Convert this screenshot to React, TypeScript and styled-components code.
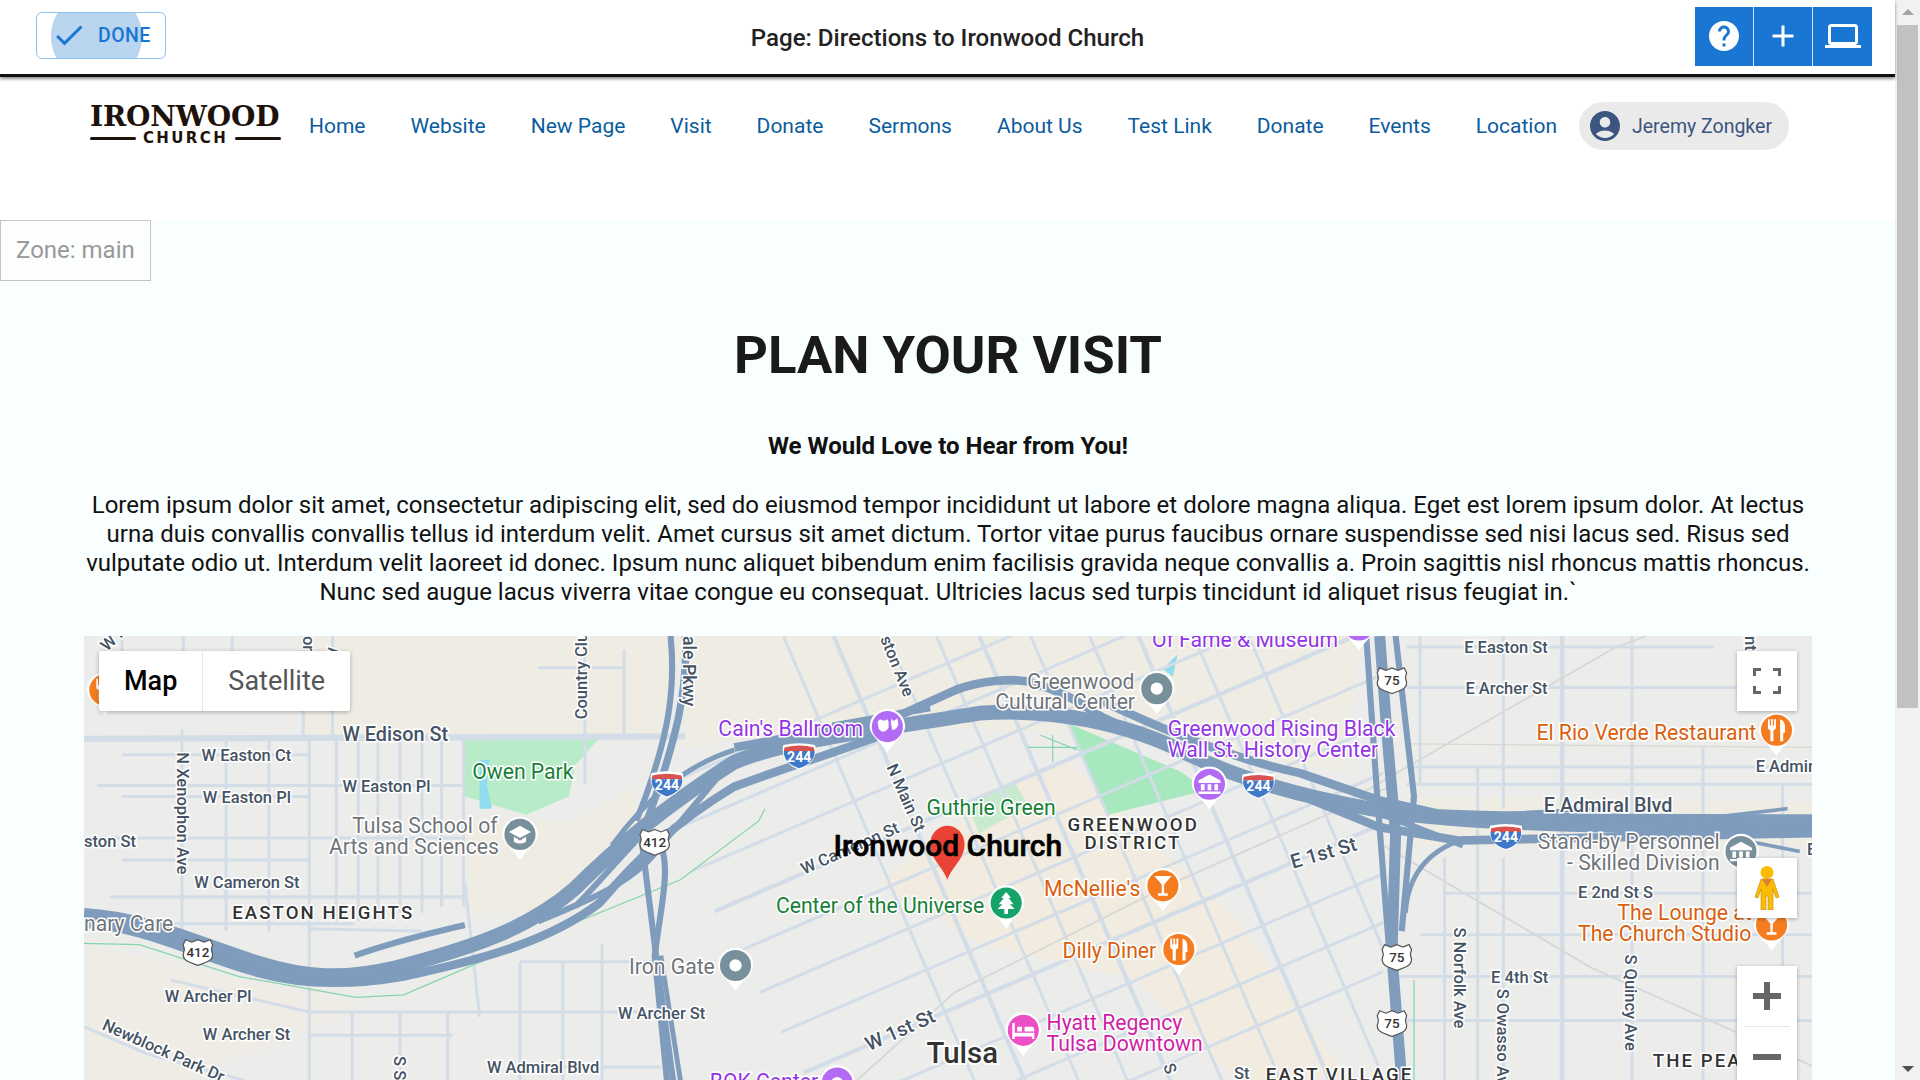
import React from 'react';
import styled, { createGlobalStyle } from 'styled-components';
import { MdAccountCircle, MdAdd, MdCheck, MdHelp, MdLaptop } from 'react-icons/md';

const GlobalStyle = createGlobalStyle`
  html, body {
    margin: 0;
    padding: 0;
    height: 100%;
    overflow: hidden;
    background: #fff;
    font-family: Roboto, "Liberation Sans", sans-serif;
  }
  * { box-sizing: border-box; }
`;

const navItems = ['Home', 'Website', 'New Page', 'Visit', 'Donate', 'Sermons', 'About Us', 'Test Link', 'Donate', 'Events', 'Location'];

// map drawing uses the coordinates of the 1568 wide reference, hence the viewBox
type Lbl = [string, number, number, number?, number?];

const roadLabels: Lbl[] = [
  ['W Edison St', 280, 605, 0, 16.2],
  ['W Easton Ct', 165, 621],
  ['W Easton Pl', 280, 646],
  ['W Easton Pl', 166, 655],
  ['ston St', 69, 691],
  ['W Cameron St', 159, 725],
  ['N Xenophon Ave', 145, 614, 90],
  ['W Archer Pl', 135, 818],
  ['W Archer St', 166, 849],
  ['Newblock Park Dr', 83, 840, 24],
  ['S S', 322, 862, 90],
  ['W Admiral Blvd', 398, 876],
  ['W Archer St', 505, 832],
  ['Country Club', 480, 587, -90],
  ['ale Pkwy', 558, 519, 90, 14.5],
  ['ston Ave', 719, 521, 68],
  ['N Main St', 724, 626, 66],
  ['W Cameron St', 657, 714, -24],
  ['W 1st St', 710, 858, -24, 16.2],
  ['E 1st St', 1056, 709, -16, 16.2],
  ['E Easton St', 1196, 533],
  ['E Archer St', 1197, 566],
  ['E Admir', 1434, 630],
  ['E Admiral Blvd', 1261, 663, 0, 16.2],
  ['E 2nd St S', 1289, 733],
  ['E 4th St', 1218, 802],
  ['S Norfolk Ave', 1188, 757, 90],
  ['S Owasso Ave', 1223, 807, 90],
  ['S Quincy Ave', 1327, 779, 90],
  ['nt', 1425, 519, 90],
  ['E', 1476, 698],
  ['S', 950, 870, 70],
  ['St', 1008, 881],
  ['W H', 88, 532, -45],
  ['or', 248, 519, 90],
  ['A', 268, 528, 90],
];

const pois: { t: string; x: number; y: number; c: string }[] = [
  { t: 'Of Fame & Museum', x: 941, y: 528, c: '#9334e6' },
  { t: 'Greenwood', x: 839, y: 562, c: '#70757a' },
  { t: 'Cultural Center', x: 813, y: 579, c: '#70757a' },
  { t: "Cain's Ballroom", x: 587, y: 601, c: '#9334e6' },
  { t: 'Greenwood Rising Black', x: 954, y: 601, c: '#9334e6' },
  { t: 'Wall St. History Center', x: 954, y: 618, c: '#9334e6' },
  { t: 'El Rio Verde Restaurant', x: 1255, y: 604, c: '#d95f0e' },
  { t: 'Owen Park', x: 386, y: 636, c: '#188038' },
  { t: 'Tulsa School of', x: 288, y: 680, c: '#70757a' },
  { t: 'Arts and Sciences', x: 269, y: 697, c: '#70757a' },
  { t: 'Guthrie Green', x: 757, y: 665, c: '#188038' },
  { t: 'Stand-by Personnel', x: 1256, y: 693, c: '#70757a' },
  { t: '- Skilled Division', x: 1280, y: 710, c: '#70757a' },
  { t: "McNellie's", x: 853, y: 731, c: '#d95f0e' },
  { t: 'Center of the Universe', x: 634, y: 745, c: '#188038' },
  { t: 'Dilly Diner', x: 868, y: 782, c: '#d95f0e' },
  { t: 'Iron Gate', x: 514, y: 795, c: '#70757a' },
  { t: 'Hyatt Regency', x: 855, y: 841, c: '#d01ea6' },
  { t: 'Tulsa Downtown', x: 855, y: 858, c: '#d01ea6' },
  { t: 'The Lounge at', x: 1321, y: 751, c: '#d95f0e' },
  { t: 'The Church Studio', x: 1289, y: 768, c: '#d95f0e' },
  { t: 'BOK Center', x: 580, y: 889, c: '#9334e6' },
  { t: 'nary Care', x: 69, y: 760, c: '#70757a' },
];

const hoods: [string, number, number][] = [
  ['EASTON HEIGHTS', 190, 750],
  ['GREENWOOD', 872, 678],
  ['DISTRICT', 886, 693],
  ['EAST VILLAGE', 1034, 882],
  ['THE PEARL', 1350, 871],
];

const westStreets = [
  [149, 595, 149, 760], [185, 600, 185, 760], [220, 600, 220, 760], [253, 600, 253, 882], [275, 600, 275, 752],
  [293, 600, 293, 752], [309, 600, 309, 750], [327, 600, 327, 745], [345, 600, 345, 745], [361, 600, 361, 740], [379, 600, 379, 740],
  [80, 641, 253, 641], [100, 616, 253, 616], [100, 650, 253, 650], [69, 684, 379, 684], [100, 702, 253, 702], [90, 732, 379, 732],
  [69, 754, 290, 754], [253, 641, 379, 641], [253, 758, 345, 760], [253, 826, 540, 826], [140, 800, 253, 826], [253, 845, 370, 845],
  [288, 826, 288, 882], [327, 826, 327, 882], [366, 826, 366, 882], [425, 785, 425, 882], [460, 785, 460, 882], [492, 770, 492, 882],
  [425, 785, 540, 785], [425, 871, 540, 871], [69, 838, 120, 860], [120, 860, 200, 882], [380, 720, 392, 830], [100, 519, 100, 570],
  [150, 519, 150, 570], [190, 519, 190, 570], [248, 519, 248, 600], [272, 519, 272, 600], [478, 519, 478, 640], [510, 530, 510, 601], [440, 545, 510, 545],
];

const eastStreets = [
  [1149, 528, 1400, 528], [1149, 561, 1456, 561], [1149, 626, 1480, 626], [1149, 640, 1480, 640], [1180, 729, 1480, 729], [1160, 763, 1480, 763],
  [1140, 797, 1480, 797], [1140, 833, 1480, 833], [1207, 626, 1207, 882], [1228, 519, 1228, 660], [1228, 700, 1228, 882], [1333, 519, 1333, 882],
  [1391, 610, 1391, 882], [1456, 640, 1456, 882], [1160, 519, 1160, 640], [1180, 700, 1180, 882],
];

const diagTops = [640, 681, 725, 765, 800, 842, 890, 930, 975, 1020];
const crossAt800 = [530, 570, 610, 651, 692, 733, 773, 814, 855, 895, 935];
const SLOPE = 0.43;

const MapArt = () => (
  <MapSvg viewBox="69 519 1411 363" preserveAspectRatio="xMinYMin slice">
    <defs>
      <clipPath id="downtown">
        <polygon points="540,519 1130,519 1130,882 660,882 560,700" />
      </clipPath>
    </defs>
    <rect x="69" y="519" width="1411" height="363" fill="#ecedea" />

    <polygon points="250,519 560,519 540,600 250,600" fill="#efece3" />
    <polygon points="380,670 470,670 520,640 520,690 440,745 384,745" fill="#efece3" />
    <polygon points="69,770 200,800 300,820 150,882 69,882" fill="#efece6" />
    <polygon points="560,519 1110,519 1100,630 900,600 700,590 560,610" fill="#efece3" />
    <polygon points="820,640 870,620 1010,750 1100,880 1010,882 930,800 800,770 720,720" fill="#f1ecdf" />
    <polygon points="1150,650 1480,655 1480,690 1150,690" fill="#efece3" />

    <polygon points="380,602 490,602 470,625 465,650 430,665 380,650" fill="#b8ecc8" />
    <polygon points="392,620 400,620 398,640 402,660 392,660" fill="#8fdcf0" />
    <polygon points="872,590 965,630 985,645 905,665" fill="#a8e8bf" />
    <polygon points="790,657 830,640 840,658 800,680" fill="#c8ebd0" />
    <polygon points="950,546 962,534 958,552" fill="#8fdcf0" />

    {westStreets.map(([a, b, c, d], i) => <Street key={`w${i}`} x1={a} y1={b} x2={c} y2={d} />)}
    {eastStreets.map(([a, b, c, d], i) => <Street key={`e${i}`} x1={a} y1={b} x2={c} y2={d} />)}
    <Street x1={69} y1={603} x2={560} y2={601} $w={5} />
    <Street x1={1276} y1={519} x2={1276} y2={882} $w={4} />
    <Street x1={1150} y1={607} x2={1480} y2={610} $w={1} $c="#d8d8d0" />
    <g clipPath="url(#downtown)">
      {diagTops.map((x, i) => <Street key={`d${i}`} x1={x} y1={519} x2={x + SLOPE * 363} y2={882} $w={i % 3 === 1 ? 3.5 : 2.5} />)}
      {crossAt800.map((y, i) => <Street key={`c${i}`} x1={500} y1={y + 300 * SLOPE} x2={1200} y2={y - 400 * SLOPE} $w={i % 4 === 3 ? 3.5 : 2.5} />)}
    </g>
    <Rail d="M1090 660 L1320 528 L1345 519" />
    <Rail d="M700 882 L780 810 L960 720 L1140 640" />
    <Rail d="M1130 690 L1300 790 L1480 870" />
    <Trail d="M69 770 L114 771 L195 797 L291 814 L330 812 L421 773 L556 718 L620 670 L625 660" />
    <Trail d="M1155 800 L1155 882" />
    <Trail d="M880 612 L850 600 M860 600 L860 622 M840 610 L880 610" />

    <Freeway $w={12} d="M69 747 C120 750 160 770 211 786 C250 798 280 800 323 790 C380 775 430 760 470 725 C500 695 540 660 600 622 C640 605 720 595 800 582 C860 578 920 590 970 615 C1010 635 1060 650 1130 662 C1200 672 1300 675 1480 675" />
    <Freeway $w={7} d="M69 754 C120 757 160 780 211 794 C250 805 290 804 330 797 C400 782 450 767 490 737 C520 702 550 672 600 642 C640 627 680 615 720 600" />
    <Freeway $w={5} d="M290 780 C330 766 360 760 380 755" />
    <Freeway $w={5} d="M300 800 C330 797 360 790 382 785" />
    <Freeway $w={5} d="M440 752 C480 735 520 720 540 690 L590 630" />
    <Freeway $w={5} d="M470 740 C500 710 525 675 570 640" />
    <Freeway $w={5} d="M525 680 C545 655 575 625 640 610" />
    <Freeway $w={4} d="M500 690 C530 650 560 625 600 612" />
    <Freeway $w={6} d="M560 519 C562 560 555 600 525 680" />
    <Freeway $w={5} d="M548 519 C552 560 548 600 520 670" />
    <Freeway $w={5} d="M524 683 L537 787 L550 882" />
    <Freeway $w={5} d="M540 690 C548 710 540 740 535 780 L545 882" />
    <Freeway $w={4} d="M556 882 L540 780" />
    <Freeway $w={7} d="M600 610 C660 600 700 590 739 582 L781 563 C800 556 830 552 846 558 C870 565 885 575 900 585 L965 615" />
    <Freeway $w={5} d="M680 592 L760 578" />
    <Freeway $w={7} d="M900 572 C960 600 1010 620 1062 631 L1126 653 L1175 664 C1280 668 1380 668 1480 668" />
    <Freeway $w={7} d="M1040 640 L1126 675 L1191 686 C1280 684 1380 682 1480 680" />
    <Freeway $w={3} d="M1230 664 L1310 660 M1390 668 L1460 660 M1420 685 L1470 695" />
    <Freeway $w={9} d="M1127 519 L1133 600 L1140 680 L1137 780 L1145 882" />
    <Freeway $w={5} d="M1116 519 L1125 650 L1135 780" />
    <Freeway $w={5} d="M1140 519 L1155 650 L1145 760" />
    <Freeway $w={5} d="M1130 665 L1195 690" />
    <Freeway $w={4} d="M1148 745 C1150 715 1165 695 1195 685" />

    {roadLabels.map(([t, x, y, r = 0, s = 13.5], i) => (
      <RoadText key={i} x={x} y={y} $size={s} transform={r ? `rotate(${r} ${x} ${y})` : undefined}>{t}</RoadText>
    ))}
    {hoods.map(([t, x, y]) => <HoodText key={t} x={x} y={y}>{t}</HoodText>)}
    {pois.map((p) => <PoiText key={p.t} x={p.x} y={p.y} $color={p.c}>{p.t}</PoiText>)}
    <CityText x={757} y={868}>Tulsa</CityText>

    <Shield x={545} y={640} n="244" />
    <Shield x={653} y={617} n="244" />
    <Shield x={1028} y={641} n="244" />
    <Shield x={1230} y={683} n="244" />
    <Route x={535} y={687} n="412" />
    <Route x={162} y={777} n="412" />
    <Route x={1137} y={555} n="75" />
    <Route x={1141} y={781} n="75" />
    <Route x={1137} y={835} n="75" />

    <Pin x={86} y={563} c="#f57c1f"><Fork /></Pin>
    <Pin x={1110} y={510} c="#b36bf5"><Dot /></Pin>
    <Pin x={725} y={593} c="#b36bf5">
      <path d="M-8 -4 L-6 -6 L-4 -5 L-2 -5 L0 -6 L1 -4 L1 1 Q-3 7 -7 2 Z M3 -7 L4 -5 L6 -5 L8 -7 L9 -2 Q8 2 4 3 L3 -2 Z" fill="#fff" />
    </Pin>
    <Pin x={945} y={562} c="#78909c"><Dot /></Pin>
    <Pin x={601} y={788} c="#78909c"><Dot /></Pin>
    <Pin x={988} y={640} c="#b36bf5"><Museum /></Pin>
    <Pin x={1422} y={695} c="#78909c"><Museum /></Pin>
    <Pin x={1451} y={596} c="#f57c1f"><Fork /></Pin>
    <Pin x={963} y={775} c="#f57c1f"><Fork /></Pin>
    <Pin x={950} y={723} c="#f57c1f"><Glass /></Pin>
    <Pin x={1447} y={755} c="#f57c1f"><Glass /></Pin>
    <Pin x={425} y={681} c="#78909c">
      <path d="M0 -7 L9 -2 L0 3 L-9 -2 Z M-5 2 L0 5 L5 2 L5 6 Q0 9 -5 6 Z" fill="#fff" />
    </Pin>
    <Pin x={822} y={737} c="#16a36a">
      <path d="M0 -9 L4 -4 L2 -4 L6 1 L3 1 L7 5 L1.5 5 L1.5 9 L-1.5 9 L-1.5 5 L-7 5 L-3 1 L-6 1 L-2 -4 L-4 -4 Z" fill="#fff" />
    </Pin>
    <Pin x={836} y={841} c="#ec4fc6">
      <path d="M-9 -6 L-7 -6 L-7 2 L9 2 L9 7 L7 7 L7 5 L-7 5 L-7 7 L-9 7 Z M-5 -3 H-1 V1 H-5 Z M1 -3 H7 Q9 -3 9 0 V1 H1 Z" fill="#fff" />
    </Pin>
    <Pin x={684} y={884} c="#b36bf5"><Dot /></Pin>

    <path d="M760 689 C760 680 767 674 774 674 C781 674 788 680 788 689 C788 701 778 707 774 718 C770 707 760 701 760 689 Z" fill="#ea4335" />
    <MarkerText x={681} y={699}>Ironwood Church</MarkerText>
  </MapSvg>
);

const Pin = ({ x, y, c, children }: { x: number; y: number; c: string; children: React.ReactNode }) => (
  <g transform={`translate(${x} ${y})`}>
    <path d="M-14.5 0 a14.5 14.5 0 1 1 29 0 c0 7 -9 12 -14.5 21 c-5.5 -9 -14.5 -14 -14.5 -21 z" fill="#fff" />
    <circle r="12.7" fill={c} />
    {children}
  </g>
);
const Dot = () => <circle r="5" fill="#fff" />;
const Fork = () => <path d="M-7 -9 H-5.5 V-4 H-4.5 V-9 H-3 V-4 H-2 V-9 H-.5 V-2 Q-.5 0 -2.5 0 V9 H-5 V0 Q-7 0 -7 -2 Z M3 -9 Q7 -8 7 -2 V2 H5.5 V9 H3 Z" fill="#fff" />;
const Museum = () => <path d="M0 -8 L9 -3 L9 -1 L-9 -1 L-9 -3 Z M-7 0 H-4 V5 H-7 Z M-1.5 0 H1.5 V5 H-1.5 Z M4 0 H7 V5 H4 Z M-9 6 H9 V8 H-9 Z" fill="#fff" />;
const Glass = () => <path d="M-7 -8 H7 L1 -1 V6 H4 V8 H-4 V6 H-1 V-1 Z" fill="#fff" />;

const Shield = ({ x, y, n }: { x: number; y: number; n: string }) => (
  <g transform={`translate(${x} ${y})`}>
    <path d="M-13 -9 Q0 -12 13 -9 C15 0 10 8 0 11 C-10 8 -15 0 -13 -9 Z" fill="#fff" />
    <path d="M-12 -7 Q0 -10 12 -7 L12.5 -4 H-12.5 Z" fill="#d8534f" />
    <path d="M-12.5 -4 H12.5 C13 2 9 7 0 10 C-9 7 -13 2 -12.5 -4 Z" fill="#3f78c8" />
    <ShieldText x={0} y={4.5}>{n}</ShieldText>
  </g>
);

const Route = ({ x, y, n }: { x: number; y: number; n: string }) => (
  <g transform={`translate(${x} ${y})`}>
    <path d="M-10 -10 L-5 -8 L0 -10 L5 -8 L10 -10 L12 -6 L11 -2 L12 2 C12 8 5 9 0 11 C-5 9 -12 8 -12 2 L-11 -2 L-12 -6 Z" fill="#fff" stroke="#555" strokeWidth="1" />
    <RouteText x={0} y={4}>{n}</RouteText>
  </g>
);

const App = () => (
  <>
    <GlobalStyle />
    <Page>
      <Content>
        <TopBar>
          <DoneButton>
            <Ripple />
            <DoneIcon><MdCheck size={36} /></DoneIcon>
            <DoneLabel>DONE</DoneLabel>
          </DoneButton>
          <PageTitle>Page: Directions to Ironwood Church</PageTitle>
          <ActionGroup>
            <ActionButton><MdHelp size={36} /></ActionButton>
            <ActionButton><MdAdd size={36} /></ActionButton>
            <ActionButton><MdLaptop size={36} /></ActionButton>
          </ActionGroup>
        </TopBar>

        <SiteNav>
          <Logo>
            <LogoWord>IRONWOOD</LogoWord>
            <LogoSub>
              <LogoRule />
              <LogoSubWord>CHURCH</LogoSubWord>
              <LogoRule />
            </LogoSub>
          </Logo>
          <NavList>
            {navItems.map((item, i) => <NavLink key={i}>{item}</NavLink>)}
          </NavList>
          <UserPill>
            <MdAccountCircle size={36} />
            <span>Jeremy Zongker</span>
          </UserPill>
        </SiteNav>

        <MainZone>
          <ZoneTag>Zone: main</ZoneTag>
          <Heading>PLAN YOUR VISIT</Heading>
          <SubHeading>We Would Love to Hear from You!</SubHeading>
          <BodyText>
            Lorem ipsum dolor sit amet, consectetur adipiscing elit, sed do eiusmod tempor incididunt ut labore et dolore magna aliqua. Eget est lorem ipsum dolor. At lectus urna duis convallis convallis tellus id interdum velit. Amet cursus sit amet dictum. Tortor vitae purus faucibus ornare suspendisse sed nisi lacus sed. Risus sed vulputate odio ut. Interdum velit laoreet id donec. Ipsum nunc aliquet bibendum enim facilisis gravida neque convallis a. Proin sagittis nisl rhoncus mattis rhoncus. Nunc sed augue lacus viverra vitae congue eu consequat. Ultricies lacus sed turpis tincidunt id aliquet risus feugiat in.`
          </BodyText>
          <MapFrame>
            <MapArt />
            <MapTypes>
              <MapType $active>Map</MapType>
              <MapType>Satellite</MapType>
            </MapTypes>
            <FullscreenButton>
              <svg width="28" height="26" viewBox="0 0 28 26" fill="none" stroke="#666" strokeWidth="3">
                <path d="M1.5 8V1.5H8M20 1.5H26.5V8M26.5 18V24.500H20M8 24.500H1.5V18" />
              </svg>
            </FullscreenButton>
            <PegmanButton>
              <svg width="26" height="44" viewBox="0 0 26 44">
                <circle cx="13" cy="6.500" r="6.500" fill="#fbbc04" />
                <path d="M7 13 H19 L25 31 L22 32 L19 23 V44 H14 V30 H12 V44 H7 V23 L4 32 L1 31 Z" fill="#fbbc04" stroke="#b8860b" strokeWidth="0.6" />
                <path d="M8 13 H18 L13 21 Z" fill="#d9822b" />
              </svg>
            </PegmanButton>
            <ZoomControl>
              <ZoomButton>
                <svg width="28" height="28" viewBox="0 0 28 28"><path d="M11 0H17V11H28V17H17V28H11V17H0V11H11Z" fill="#666" /></svg>
              </ZoomButton>
              <ZoomDivider />
              <ZoomButton>
                <svg width="28" height="6" viewBox="0 0 28 6"><rect width="28" height="6" fill="#666" /></svg>
              </ZoomButton>
            </ZoomControl>
          </MapFrame>
        </MainZone>
      </Content>

      <Scrollbar>
        <ArrowUp />
        <Thumb />
        <ArrowDown />
      </Scrollbar>
    </Page>
  </>
);

export default App;

const Page = styled.div`
  display: flex;
  width: 100%;
  height: 100vh;
  overflow: hidden;
`;

const Content = styled.div`
  flex: 1;
  min-width: 0;
  display: flex;
  flex-direction: column;
`;

const TopBar = styled.header`
  position: relative;
  z-index: 2;
  flex: none;
  display: grid;
  grid-template-columns: 1fr auto 1fr;
  align-items: center;
  height: 77px;
  padding: 0 23px 3px;
  background: #fff;
  border-bottom: 3px solid #111;
  box-shadow: 0 2px 3px rgba(0, 0, 0, 0.45);
`;

const DoneButton = styled.button`
  position: relative;
  overflow: hidden;
  justify-self: start;
  display: flex;
  align-items: center;
  width: 130px;
  height: 47px;
  margin: -1px 0 0 13px;
  padding: 0 0 0 14px;
  background: #fff;
  border: 1px solid #90c2ee;
  border-radius: 6px;
  color: #1976d2;
`;

const Ripple = styled.span`
  position: absolute;
  left: 14px;
  top: -22px;
  width: 91px;
  height: 91px;
  border-radius: 50%;
  background: #b9d5f0;
`;

const DoneIcon = styled.span`
  position: relative;
  display: flex;
`;

const DoneLabel = styled.span`
  position: relative;
  margin-left: 11px;
  font: 500 19.500px Roboto, sans-serif;
  letter-spacing: 0.4px;
`;

const PageTitle = styled.h1`
  margin: 5px 0 0;
  font: 500 24.100px Roboto, sans-serif;
  color: #222;
`;

const ActionGroup = styled.div`
  justify-self: end;
  display: flex;
  height: 59px;
  margin-top: 1px;
`;

const ActionButton = styled.button`
  display: flex;
  align-items: center;
  justify-content: center;
  width: 59px;
  padding: 0;
  background: #1976d2;
  border: none;
  border-right: 1px solid #cfe3f7;
  color: #fff;

  &:last-child {
    border-right: none;
  }
`;

const SiteNav = styled.nav`
  flex: none;
  display: flex;
  align-items: flex-start;
  height: 143px;
  padding: 25px 0 0 90px;
  background: #fff;
`;

const Logo = styled.div`
  display: flex;
  flex-direction: column;
  flex: none;
  width: 191px;
  margin-top: 1px;
  color: #1e130c;
`;

const LogoWord = styled.div`
  font: 700 28px/27px "DejaVu Serif", serif;
  letter-spacing: -0.2px;
  white-space: nowrap;
`;

const LogoSub = styled.div`
  display: flex;
  align-items: center;
  gap: 7px;
  margin-top: 1px;
`;

const LogoRule = styled.span`
  flex: 1;
  height: 3px;
  background: #1e130c;
  border-radius: 2px;
`;

const LogoSubWord = styled.span`
  font: 700 15px/15px "DejaVu Sans", sans-serif;
  letter-spacing: 2.4px;
`;

const NavList = styled.div`
  display: flex;
  gap: 45px;
  margin-left: 28px;
  height: 48px;
  align-items: center;
`;

const NavLink = styled.a`
  font: 400 21px Roboto, sans-serif;
  color: #0a5c9e;
  white-space: nowrap;
`;

const UserPill = styled.div`
  display: flex;
  align-items: center;
  gap: 9px;
  width: 210px;
  height: 48px;
  margin-left: 22px;
  padding: 0 0 0 8px;
  background: #eaeaea;
  border-radius: 24px;
  color: #3b5580;
  font: 400 19.500px Roboto, sans-serif;
  white-space: nowrap;
`;

const MainZone = styled.main`
  flex: 1;
  min-height: 0;
  display: flex;
  flex-direction: column;
  align-items: center;
  padding: 0 83px 0 84px;
  background: #f9fefe;
`;

const ZoneTag = styled.div`
  align-self: flex-start;
  margin-left: -84px;
  height: 61px;
  padding: 0 15px;
  border: 1px solid #c4c4c4;
  background: #fdfefe;
  color: #999;
  font: 400 24px/59px Roboto, sans-serif;
`;

const Heading = styled.h1`
  margin: 40px 0 0;
  font: 700 52.700px/68px Roboto, sans-serif;
  color: #1a1a1a;
`;

const SubHeading = styled.h3`
  margin: 43px 0 0;
  font: 700 24px/28px Roboto, sans-serif;
  color: #111;
`;

const BodyText = styled.p`
  width: 100%;
  margin: 31px 0 0;
  text-align: center;
  font: 400 24px/29px Roboto, sans-serif;
  color: #111;
`;

const MapFrame = styled.div`
  position: relative;
  flex: none;
  width: 100%;
  height: 444px;
  margin-top: 29px;
  overflow: hidden;
  background: #ecedea;
`;

const MapSvg = styled.svg`
  display: block;
  width: 100%;
  height: 100%;
  font-family: Roboto, sans-serif;
`;

const Street = styled.line<{ $w?: number; $c?: string }>`
  stroke: ${(p) => p.$c ?? '#d3dde8'};
  stroke-width: ${(p) => p.$w ?? 2.5};
`;

const Freeway = styled.path<{ $w: number }>`
  fill: none;
  stroke: #7f9cbd;
  stroke-width: ${(p) => p.$w};
  stroke-linejoin: round;
`;

const Rail = styled.path`
  fill: none;
  stroke: #d6d8d8;
  stroke-width: 1.500;
`;

const Trail = styled.path`
  fill: none;
  stroke: #85d4ac;
  stroke-width: 1;
`;

const RoadText = styled.text<{ $size: number }>`
  font-size: ${(p) => p.$size}px;
  font-weight: 500;
  fill: #455364;
  stroke: #fff;
  stroke-width: 2.500;
  paint-order: stroke;
`;

const PoiText = styled.text<{ $color: string }>`
  font-size: 17.300px;
  fill: ${(p) => p.$color};
  stroke: #fff;
  stroke-width: 2.500;
  paint-order: stroke;
`;

const HoodText = styled.text`
  font-size: 15.200px;
  font-weight: 500;
  letter-spacing: 1.700px;
  fill: #333;
  stroke: #fff;
  stroke-width: 2.500;
  paint-order: stroke;
`;

const CityText = styled.text`
  font-size: 24px;
  font-weight: 500;
  fill: #333;
  stroke: #fff;
  stroke-width: 3;
  paint-order: stroke;
`;

const MarkerText = styled.text`
  font-size: 24.500px;
  font-weight: 500;
  fill: #000;
  stroke: #000;
  stroke-width: 0.500;
`;

const ShieldText = styled.text`
  font-size: 11.500px;
  font-weight: 700;
  text-anchor: middle;
  fill: #fff;
`;

const RouteText = styled.text`
  font-size: 11px;
  font-weight: 500;
  text-anchor: middle;
  fill: #333;
`;

const MapTypes = styled.div`
  position: absolute;
  left: 15px;
  top: 15px;
  display: flex;
  height: 60px;
  background: #fff;
  border-radius: 2px;
  box-shadow: 0 1px 4px rgba(0, 0, 0, 0.3);
`;

const MapType = styled.div<{ $active?: boolean }>`
  padding: 0 25px;
  font: ${(p) => (p.$active ? 500 : 400)} 27px/60px Roboto, sans-serif;
  color: ${(p) => (p.$active ? '#000' : '#565656')};
  border-right: ${(p) => (p.$active ? '1px solid #e6e6e6' : 'none')};
`;

const ControlButton = styled.div`
  position: absolute;
  right: 15px;
  display: flex;
  align-items: center;
  justify-content: center;
  width: 60px;
  height: 60px;
  background: #fff;
  box-shadow: 0 1px 4px rgba(0, 0, 0, 0.3);
`;

const FullscreenButton = styled(ControlButton)`
  top: 15px;
`;

const PegmanButton = styled(ControlButton)`
  top: 222px;
`;

const ZoomControl = styled.div`
  position: absolute;
  right: 15px;
  top: 330px;
  width: 60px;
  background: #fff;
  box-shadow: 0 1px 4px rgba(0, 0, 0, 0.3);
`;

const ZoomButton = styled.div`
  display: flex;
  align-items: center;
  justify-content: center;
  height: 60px;
`;

const ZoomDivider = styled.div`
  height: 1px;
  margin: 0 7px;
  background: #e6e6e6;
`;

const Scrollbar = styled.div`
  flex: none;
  display: flex;
  flex-direction: column;
  align-items: center;
  width: 25px;
  height: 100%;
  background: #f1f1f1;
`;

const ArrowUp = styled.div`
  flex: none;
  width: 0;
  height: 0;
  margin: 9px 0 10px;
  border-left: 6px solid transparent;
  border-right: 6px solid transparent;
  border-bottom: 6px solid #a3a3a3;
`;

const Thumb = styled.div`
  flex: none;
  width: 21px;
  height: 683px;
  background: #c1c1c1;
`;

const ArrowDown = styled.div`
  flex: none;
  width: 0;
  height: 0;
  margin-top: auto;
  margin-bottom: 8px;
  border-left: 6px solid transparent;
  border-right: 6px solid transparent;
  border-top: 6px solid #505050;
`;
